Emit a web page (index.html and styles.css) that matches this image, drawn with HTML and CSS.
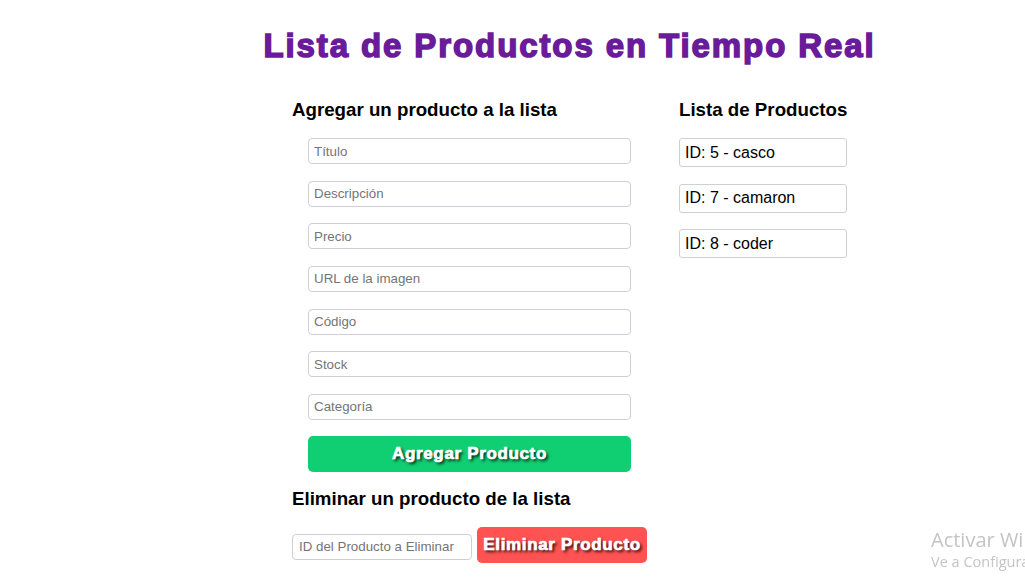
FILE: index.html
```html
<!DOCTYPE html>
<html lang="es">
<head>
<meta charset="utf-8">
<title>Lista de Productos en Tiempo Real</title>
<link rel="stylesheet" href="styles.css">
</head>
<body>
<main class="page">
  <h1 class="title">Lista de Productos en Tiempo Real</h1>
  <div class="columns">
    <section class="add-col">
      <h3 class="section-title">Agregar un producto a la lista</h3>
      <form class="add-form">
        <input class="field" type="text" placeholder="Título">
        <input class="field" type="text" placeholder="Descripción">
        <input class="field" type="text" placeholder="Precio">
        <input class="field" type="text" placeholder="URL de la imagen">
        <input class="field" type="text" placeholder="Código">
        <input class="field" type="text" placeholder="Stock">
        <input class="field" type="text" placeholder="Categoría">
        <button class="btn btn-add" type="button">Agregar Producto</button>
      </form>
      <h3 class="section-title delete-title">Eliminar un producto de la lista</h3>
      <div class="delete-row">
        <input class="field field-id" type="text" placeholder="ID del Producto a Eliminar">
        <button class="btn btn-delete" type="button">Eliminar Producto</button>
      </div>
    </section>
    <section class="list-col">
      <h3 class="section-title">Lista de Productos</h3>
      <ul class="product-list">
        <li class="product-item">ID: 5 - casco</li>
        <li class="product-item">ID: 7 - camaron</li>
        <li class="product-item">ID: 8 - coder</li>
      </ul>
    </section>
  </div>
</main>
<div class="watermark">
  <div class="wm-title">Activar Windows</div>
  <div class="wm-sub">Ve a Configuración para activar Windows.</div>
</div>
</body>
</html>
```

FILE: styles.css
```css
html, body {
  margin: 0;
  padding: 0;
  background: #ffffff;
  overflow: hidden;
}

body {
  font-family: "Liberation Sans", Arial, sans-serif;
  color: #000;
  height: 584px;
}

.page {
  padding-left: 292px;
  width: 555px;
}

.title {
  margin: 27px -150px 0;
  font-size: 33px;
  font-weight: bold;
  letter-spacing: 1.9px;
  -webkit-text-stroke: 1.5px #6a1b9a;
  line-height: normal;
  color: #6a1b9a;
  text-align: center;
  white-space: nowrap;
}

.columns {
  display: flex;
  margin-top: 34px;
}

.add-col {
  width: 355px;
  display: flex;
  flex-direction: column;
}

.list-col {
  margin-left: 32px;
  min-width: 168px;
}

.section-title {
  margin: 0;
  font-size: 18.72px;
  font-weight: bold;
  line-height: normal;
  white-space: nowrap;
}

.add-form {
  margin: 17px 0 0;
  padding-left: 16px;
  display: flex;
  flex-direction: column;
  gap: 16.67px;
}

.field {
  box-sizing: border-box;
  width: 323px;
  height: 26px;
  margin: 0;
  padding: 0 5px;
  border: 1px solid #cfcfd6;
  border-radius: 4px;
  font-family: "Liberation Sans", Arial, sans-serif;
  font-size: 13.33px;
  color: #000;
  background: #fff;
}

.field::placeholder {
  color: #757575;
}

.btn {
  box-sizing: border-box;
  border: none;
  border-radius: 5px;
  color: #fff;
  font-family: "Liberation Sans", Arial, sans-serif;
  font-weight: bold;
  font-size: 17px;
  letter-spacing: 0.65px;
  -webkit-text-stroke: 0.7px #fff;
  text-shadow: 2px 2px 3px rgba(0, 0, 0, 0.9);
  cursor: pointer;
}

.btn-add {
  width: 323px;
  height: 36px;
  margin-top: -0.67px;
  background: #10cf72;
}

.delete-title {
  margin-top: 16px;
}

.delete-row {
  margin-top: 17.5px;
  display: flex;
  align-items: flex-end;
  gap: 5px;
}

.field-id {
  width: 180px;
  margin-bottom: 3.5px;
  padding: 0 6px;
}

.btn-delete {
  height: 36px;
  width: 170px;
  padding: 0;
  background: #ff5252;
  white-space: nowrap;
}

.product-list {
  list-style: none;
  margin: 17px 0 0;
  padding: 0;
  display: flex;
  flex-direction: column;
  gap: 16.5px;
}

.product-item {
  box-sizing: border-box;
  width: 168px;
  height: 29px;
  padding: 0 5px;
  display: flex;
  align-items: center;
  border: 1px solid #cfcfd6;
  border-radius: 3px;
  font-size: 16px;
}

.watermark {
  position: fixed;
  left: 931px;
  right: 0;
  top: 526px;
  overflow: hidden;
  white-space: nowrap;
  font-family: "Open Sans", "Noto Sans", sans-serif;
  color: #c4c4c4;
}

.wm-title {
  font-size: 20px;
  line-height: 27px;
}

.wm-sub {
  font-size: 14.5px;
  line-height: 18px;
}
```
